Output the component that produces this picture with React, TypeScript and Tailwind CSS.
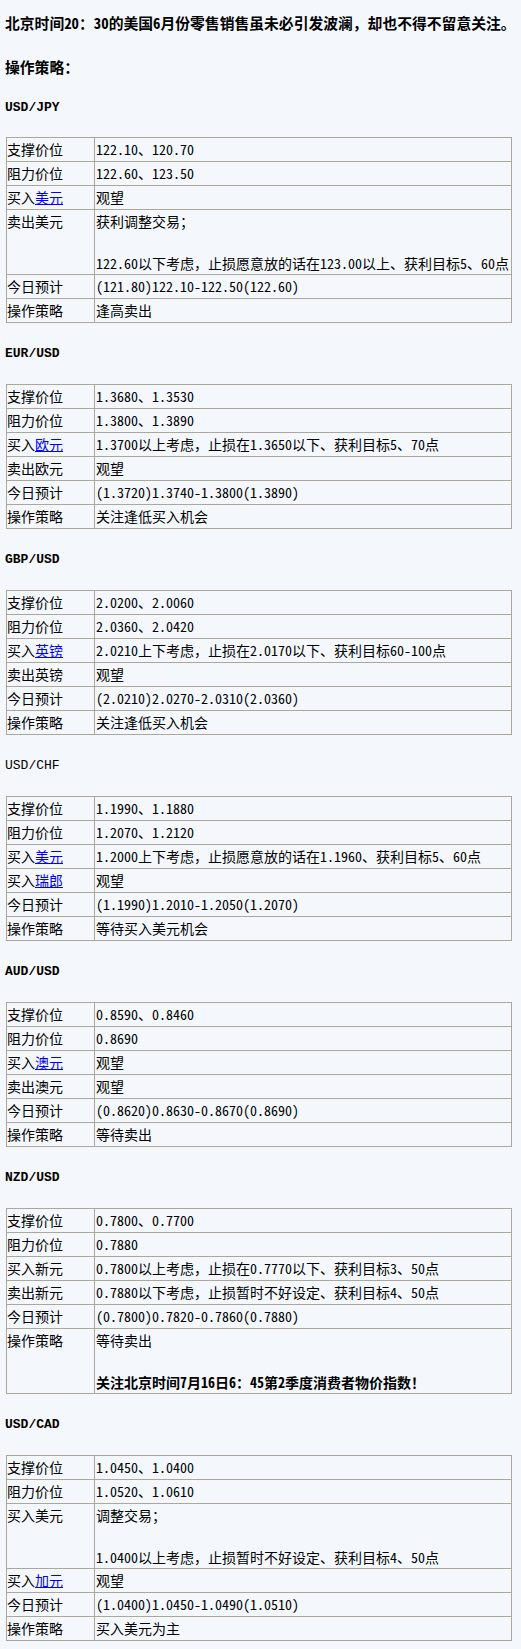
import type { ReactNode } from "react";

type Row = { label: ReactNode; value: string | string[]; boldLast?: boolean };
type Pair = { name: string; bold?: boolean; rows: Row[] };

const cjk = "font-['Noto_Sans_CJK_SC',sans-serif]";

// latin runs get half-width glyphs, like the old SimSun page; CJK punctuation stays full width
function hw(text: string) {
  return text.split(/([\x20-\x7e]+)/).map((part, i) =>
    /^[\x20-\x7e]+$/.test(part) ? (
      <span key={i} className="[font-feature-settings:'hwid']">
        {part}
      </span>
    ) : (
      part
    )
  );
}

function L({ children }: { children: ReactNode }) {
  return (
    <a href="#" className="text-[#0000ff] underline">
      {children}
    </a>
  );
}

const PAIRS: Pair[] = [
  {
    name: "USD/JPY",
    bold: true,
    rows: [
      { label: "支撑价位", value: "122.10、120.70" },
      { label: "阻力价位", value: "122.60、123.50" },
      { label: <>买入<L>美元</L></>, value: "观望" },
      {
        label: "卖出美元",
        value: ["获利调整交易；", "", "122.60以下考虑，止损愿意放的话在123.00以上、获利目标5、60点"],
      },
      { label: "今日预计", value: "(121.80)122.10-122.50(122.60)" },
      { label: "操作策略", value: "逢高卖出" },
    ],
  },
  {
    name: "EUR/USD",
    bold: true,
    rows: [
      { label: "支撑价位", value: "1.3680、1.3530" },
      { label: "阻力价位", value: "1.3800、1.3890" },
      { label: <>买入<L>欧元</L></>, value: "1.3700以上考虑，止损在1.3650以下、获利目标5、70点" },
      { label: "卖出欧元", value: "观望" },
      { label: "今日预计", value: "(1.3720)1.3740-1.3800(1.3890)" },
      { label: "操作策略", value: "关注逢低买入机会" },
    ],
  },
  {
    name: "GBP/USD",
    bold: true,
    rows: [
      { label: "支撑价位", value: "2.0200、2.0060" },
      { label: "阻力价位", value: "2.0360、2.0420" },
      { label: <>买入<L>英镑</L></>, value: "2.0210上下考虑，止损在2.0170以下、获利目标60-100点" },
      { label: "卖出英镑", value: "观望" },
      { label: "今日预计", value: "(2.0210)2.0270-2.0310(2.0360)" },
      { label: "操作策略", value: "关注逢低买入机会" },
    ],
  },
  {
    name: "USD/CHF",
    rows: [
      { label: "支撑价位", value: "1.1990、1.1880" },
      { label: "阻力价位", value: "1.2070、1.2120" },
      { label: <>买入<L>美元</L></>, value: "1.2000上下考虑，止损愿意放的话在1.1960、获利目标5、60点" },
      { label: <>买入<L>瑞郎</L></>, value: "观望" },
      { label: "今日预计", value: "(1.1990)1.2010-1.2050(1.2070)" },
      { label: "操作策略", value: "等待买入美元机会" },
    ],
  },
  {
    name: "AUD/USD",
    bold: true,
    rows: [
      { label: "支撑价位", value: "0.8590、0.8460" },
      { label: "阻力价位", value: "0.8690" },
      { label: <>买入<L>澳元</L></>, value: "观望" },
      { label: "卖出澳元", value: "观望" },
      { label: "今日预计", value: "(0.8620)0.8630-0.8670(0.8690)" },
      { label: "操作策略", value: "等待卖出" },
    ],
  },
  {
    name: "NZD/USD",
    bold: true,
    rows: [
      { label: "支撑价位", value: "0.7800、0.7700" },
      { label: "阻力价位", value: "0.7880" },
      { label: "买入新元", value: "0.7800以上考虑，止损在0.7770以下、获利目标3、50点" },
      { label: "卖出新元", value: "0.7880以下考虑，止损暂时不好设定、获利目标4、50点" },
      { label: "今日预计", value: "(0.7800)0.7820-0.7860(0.7880)" },
      {
        label: "操作策略",
        value: ["等待卖出", "", "关注北京时间7月16日6：45第2季度消费者物价指数！"],
        boldLast: true,
      },
    ],
  },
  {
    name: "USD/CAD",
    bold: true,
    rows: [
      { label: "支撑价位", value: "1.0450、1.0400" },
      { label: "阻力价位", value: "1.0520、1.0610" },
      {
        label: "买入美元",
        value: ["调整交易；", "", "1.0400以上考虑，止损暂时不好设定、获利目标4、50点"],
      },
      { label: <>买入<L>加元</L></>, value: "观望" },
      { label: "今日预计", value: "(1.0400)1.0450-1.0490(1.0510)" },
      { label: "操作策略", value: "买入美元为主" },
    ],
  },
];

function Value({ row }: { row: Row }) {
  if (typeof row.value === "string") return <>{hw(row.value)}</>;
  const last = row.value.length - 1;
  return (
    <>
      {row.value.map((line, i) => (
        <div key={i} className={`h-[21px] ${row.boldLast && i === last ? "font-bold" : ""}`}>
          {hw(line)}
        </div>
      ))}
    </>
  );
}

function PairBlock({ pair, first }: { pair: Pair; first: boolean }) {
  return (
    <section>
      <div
        className={`mt-[20px] h-[21px] font-['Liberation_Mono',monospace] text-[13px] leading-[21px] ${
          pair.bold ? "font-bold" : "font-normal"
        }`}
      >
        {pair.name}
      </div>
      <table
        className={`${first ? "mt-[19px]" : "mt-[20px]"} ml-px w-[506px] table-fixed border-collapse ${cjk} text-[14px] leading-[21px] text-black`}
      >
        <colgroup>
          <col className="w-[88px]" />
          <col />
        </colgroup>
        <tbody>
          {pair.rows.map((r, i) => {
            const multi = Array.isArray(r.value);
            return (
              <tr key={i}>
                <td
                  className={`border border-[#aca899] px-0 align-top ${multi ? "pt-px pb-0" : "py-px"}`}
                >
                  {r.label}
                </td>
                <td
                  className={`border border-[#aca899] pl-px pr-0 align-top whitespace-nowrap ${
                    multi ? "pt-px pb-0" : "py-px"
                  }`}
                >
                  <Value row={r} />
                </td>
              </tr>
            );
          })}
        </tbody>
      </table>
    </section>
  );
}

export default function App() {
  return (
    <div className="min-h-[1649px] bg-[#f4f8fc] px-[5px] pt-[12px] pb-[8px] text-black">
      <div className={`h-[21px] ${cjk} text-[14.8px] font-bold leading-[21px] whitespace-nowrap`}>
        {hw("北京时间20：30的美国6月份零售销售虽未必引发波澜，却也不得不留意关注。")}
      </div>
      <div className={`mt-[23px] h-[21px] ${cjk} text-[14.8px] font-bold leading-[21px]`}>操作策略：</div>
      {PAIRS.map((p, i) => (
        <PairBlock key={p.name} pair={p} first={i === 0} />
      ))}
    </div>
  );
}
